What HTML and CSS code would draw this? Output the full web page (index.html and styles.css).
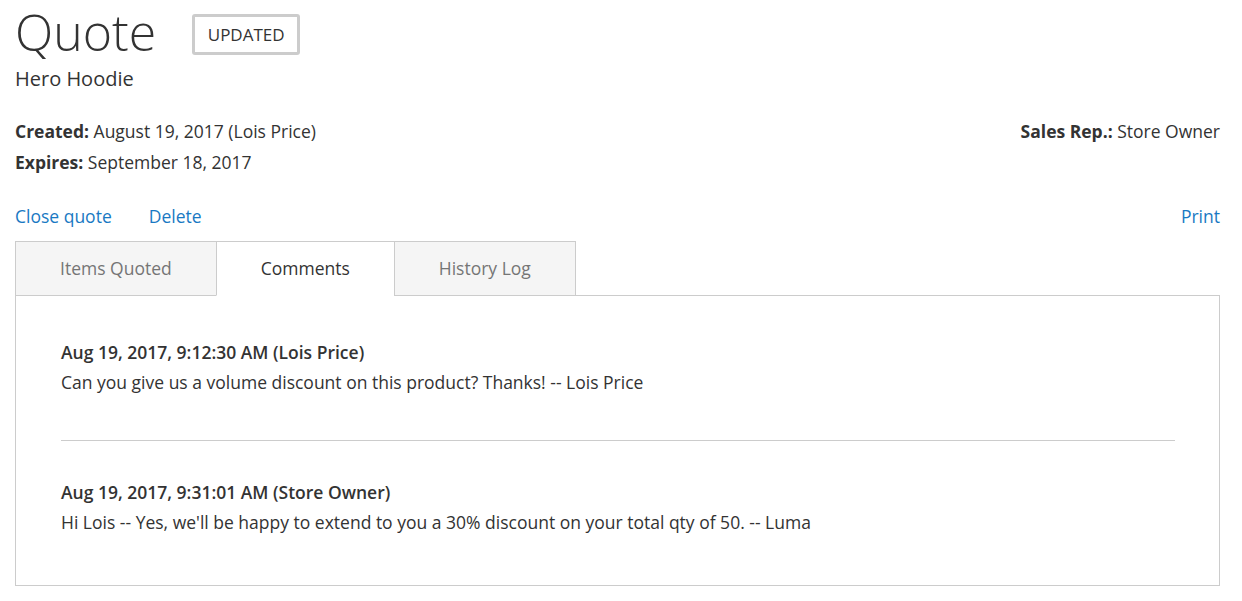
FILE: index.html
```html
<!DOCTYPE html>
<html lang="en">
<head>
<meta charset="utf-8">
<title>Quote</title>
<link rel="stylesheet" href="styles.css">
</head>
<body>
<div class="page">
  <div class="title-row">
    <h1 class="page-title">Quote</h1>
    <span class="status">UPDATED</span>
  </div>
  <div class="quote-name">Hero Hoodie</div>

  <div class="meta">
    <div class="meta-left">
      <div class="meta-line"><strong>Created:</strong> August 19, 2017 (Lois Price)</div>
      <div class="meta-line"><strong>Expires:</strong> September 18, 2017</div>
    </div>
    <div class="meta-right">
      <div class="meta-line"><strong>Sales Rep.:</strong> Store Owner</div>
    </div>
  </div>

  <div class="actions">
    <div class="actions-left">
      <a href="#" class="link">Close quote</a>
      <a href="#" class="link">Delete</a>
    </div>
    <a href="#" class="link">Print</a>
  </div>

  <div class="tabs">
    <div class="tab">Items Quoted</div>
    <div class="tab active">Comments</div>
    <div class="tab">History Log</div>
  </div>
  <div class="tab-content">
    <div class="comment">
      <div class="comment-head">Aug 19, 2017, 9:12:30 AM (Lois Price)</div>
      <div class="comment-text">Can you give us a volume discount on this product? Thanks! -- Lois Price</div>
    </div>
    <div class="comment">
      <div class="comment-head">Aug 19, 2017, 9:31:01 AM (Store Owner)</div>
      <div class="comment-text">Hi Lois -- Yes, we'll be happy to extend to you a 30% discount on your total qty of 50. -- Luma</div>
    </div>
  </div>
</div>
</body>
</html>
```

FILE: styles.css
```css
* { box-sizing: border-box; }
html, body { margin: 0; padding: 0; background: #fff; }
body {
  font-family: "Open Sans", "Noto Sans", sans-serif;
  color: #333;
  font-size: 17.5px;
}
.page {
  width: 1205px;
  margin-left: 15px;
  padding-top: 2px;
}
.title-row {
  display: flex;
  align-items: flex-start;
}
.page-title {
  margin: 0;
  font-size: 50px;
  font-weight: 300;
  line-height: 60px;
}
.status {
  margin-left: 36px;
  margin-top: 12px;
  border: 3px solid #ccc;
  border-radius: 3px;
  font-size: 17px;
  line-height: 35px;
  height: 41px;
  padding: 0 12.5px;
  color: #333;
}
.quote-name {
  margin-top: 3px;
  font-size: 20px;
  line-height: 28px;
}
.meta {
  margin-top: 23px;
  display: flex;
  justify-content: space-between;
}
.meta-line {
  line-height: 31px;
}
.meta-line strong { font-weight: 700; }
.actions {
  margin-top: 26px;
  display: flex;
  justify-content: space-between;
  line-height: 24px;
}
.actions-left {
  display: flex;
  gap: 37px;
}
.link {
  color: #1979c3;
  text-decoration: none;
}
.tabs {
  margin-top: 13px;
  display: flex;
  position: relative;
  z-index: 1;
  margin-bottom: -1px;
}
.tab {
  height: 55px;
  line-height: 53px;
  padding: 0 44px;
  border: 1px solid #ccc;
  background: #f5f5f5;
  color: #757575;
  font-size: 17.5px;
}
.tab + .tab { margin-left: -1px; }
.tab.active {
  background: #fff;
  color: #333;
  border-bottom-color: #fff;
}
.tab-content {
  border: 1px solid #ccc;
  padding: 41px 44px 47px 45px;
  height: 291px;
}
.comment-head {
  font-weight: 600;
  line-height: 30px;
}
.comment-text {
  line-height: 30px;
}
.comment:first-child {
  padding-bottom: 43px;
  border-bottom: 1px solid #ccc;
}
.comment + .comment {
  padding-top: 36px;
}
```
